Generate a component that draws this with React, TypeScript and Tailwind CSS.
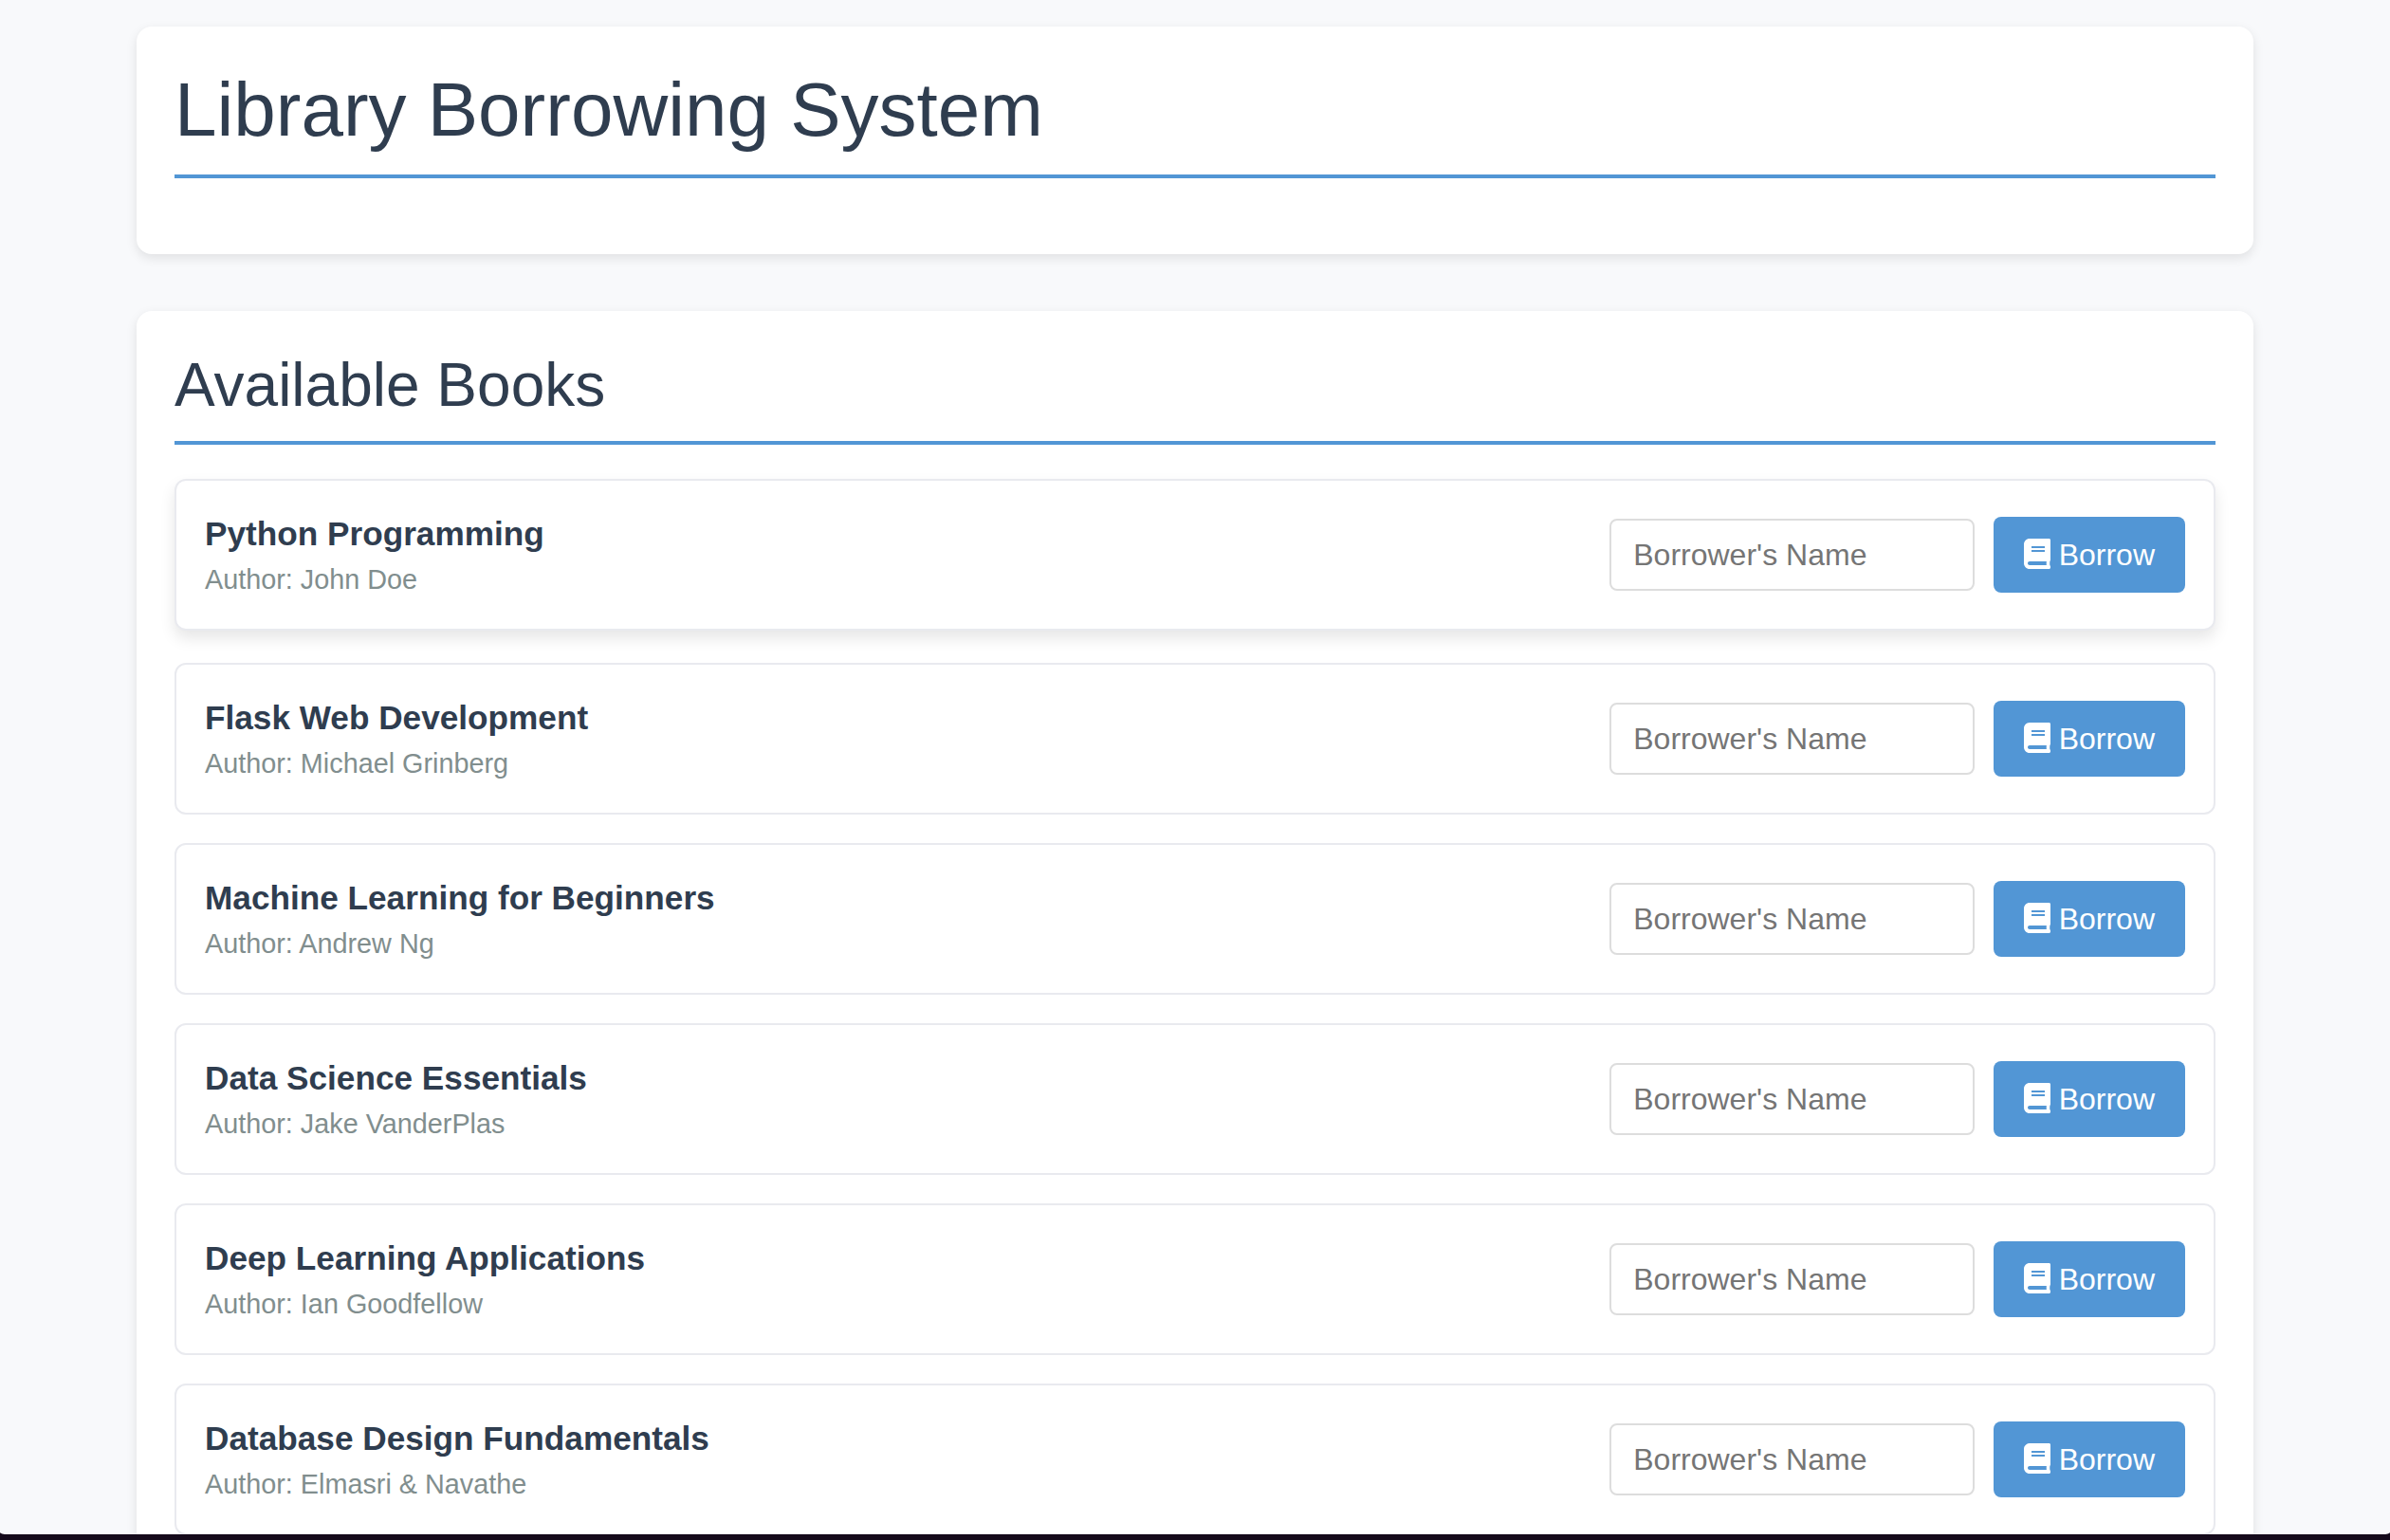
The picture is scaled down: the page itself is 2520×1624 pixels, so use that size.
import React from "react";

type Book = { title: string; author: string; raised?: boolean };

const books: Book[] = [
  { title: "Python Programming", author: "John Doe", raised: true },
  { title: "Flask Web Development", author: "Michael Grinberg" },
  { title: "Machine Learning for Beginners", author: "Andrew Ng" },
  { title: "Data Science Essentials", author: "Jake VanderPlas" },
  { title: "Deep Learning Applications", author: "Ian Goodfellow" },
  { title: "Database Design Fundamentals", author: "Elmasri & Navathe" },
];

function BookIcon() {
  return (
    <svg viewBox="0 0 448 512" className="mb-0.5 h-8 w-7 shrink-0" fill="currentColor" aria-hidden="true">
      <path d="M448 360V24c0-13.300-10.700-24-24-24H96C43 0 0 43 0 96v320c0 53 43 96 96 96h328c13.300 0 24-10.700 24-24v-16c0-7.500-3.500-14.300-8.900-18.700-4.200-15.400-4.200-59.300 0-74.700 5.400-4.300 8.900-11.100 8.900-18.600zM128 134c0-3.300 2.700-6 6-6h212c3.300 0 6 2.700 6 6v20c0 3.300-2.700 6-6 6H134c-3.300 0-6-2.700-6-6v-20zm0 64c0-3.300 2.700-6 6-6h212c3.300 0 6 2.700 6 6v20c0 3.300-2.700 6-6 6H134c-3.300 0-6-2.700-6-6v-20zm253.400 250H96c-17.700 0-32-14.300-32-32 0-17.600 14.400-32 32-32h285.400c-1.900 17.100-1.900 46.900 0 64z" />
    </svg>
  );
}

function BookRow({ title, author, raised }: Book) {
  return (
    <li
      className={
        "flex shrink-0 items-center justify-between rounded-xl border-2 border-[#e9eaef] bg-white p-[30px] " +
        (raised ? "-translate-y-1 shadow-[0_8px_16px_rgba(0,0,0,0.1)]" : "")
      }
    >
      <div>
        <h3 className="text-[35.2px] leading-[1.5] font-bold text-[#2f3d4f]">{title}</h3>
        <p className="text-[28.8px] leading-[1.5] text-[#818e8e]">Author: {author}</p>
      </div>
      <form className="flex items-center gap-5">
        <input
          type="text"
          placeholder="Borrower's Name"
          className="h-[76px] w-[385px] rounded-lg border-2 border-[#dddddd] bg-white px-[23.5px] pt-0.5 text-[32px] text-[#2f3d4f] placeholder:text-[#757575]"
        />
        <button
          type="button"
          className="flex h-20 items-center gap-[8.9px] rounded-lg bg-[#5296d5] px-8 text-[32px] leading-[48px] text-white"
        >
          <BookIcon />
          Borrow
        </button>
      </form>
    </li>
  );
}

export default function App() {
  return (
    <div className="h-[1624px] overflow-hidden bg-[#150a1b] font-['Liberation_Sans',Arial,sans-serif]">
      <main className="flex h-[1618px] flex-col gap-[60px] overflow-hidden rounded-b-[8px_2px] bg-[#f8f9fb] px-36 pt-7">
        <header className="shrink-0 rounded-2xl bg-white p-10 shadow-[0_4px_12px_rgba(0,0,0,0.1)]">
          <h1 className="mb-10 border-b-4 border-[#5296d5] pb-5 text-[80px] leading-[1.2] text-[#2f3d4f]">
            Library Borrowing System
          </h1>
        </header>
        <section className="shrink-0 rounded-2xl bg-white p-10 shadow-[0_4px_12px_rgba(0,0,0,0.1)]">
          <h2 className="mb-10 border-b-4 border-[#5296d5] pb-5 text-[64px] leading-[1.2] text-[#2f3d4f]">
            Available Books
          </h2>
          <ul className="flex flex-col gap-[30px]">
            {books.map((book) => (
              <BookRow key={book.title} {...book} />
            ))}
          </ul>
        </section>
      </main>
    </div>
  );
}
